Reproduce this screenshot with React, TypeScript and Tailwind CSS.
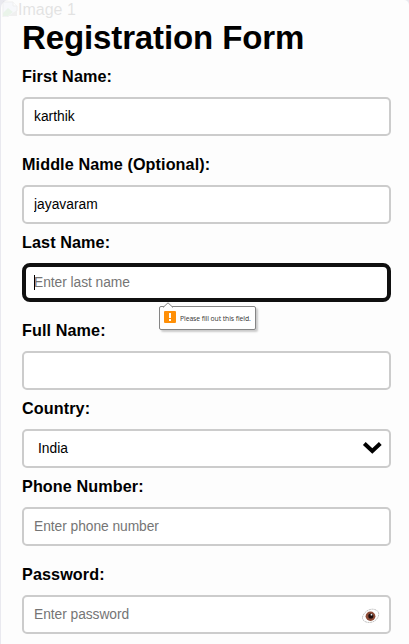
import { ChangeEvent, ReactNode, useState } from "react";

const inputClass =
  "block h-[39px] w-full rounded-[5px] border-2 border-[#cccccc] bg-white px-[10px] text-[13.8px] text-black placeholder:tracking-[-0.05px] placeholder:text-[#757575] outline-none";

function Field({ label, className, children }: { label: string; className: string; children: ReactNode }) {
  return (
    <div className={className}>
      <label className="block h-[30px] text-[16.2px] leading-[18px] font-bold tracking-[0.09px] text-black">
        {label}
      </label>
      <div className="relative">{children}</div>
    </div>
  );
}

function BrokenImage() {
  return (
    <div className="absolute top-0 left-px flex items-start opacity-10">
      <svg className="mt-px h-4 w-4" viewBox="0 0 16 16">
        <path d="M1 1h10l4 4v5L5 16H1z" fill="#c5d6f3" stroke="#888" />
        <path d="M1 15v-3l5-5 5 4-5 4z" fill="#4caf50" />
        <path d="M11 1v4h4" fill="#fff" stroke="#888" />
        <path d="M7 15l8-6v6z" fill="#888" />
      </svg>
      <span className="text-[16px] leading-[19px] text-black">Image 1</span>
    </div>
  );
}

function ValidationBubble() {
  return (
    <div className="absolute top-[43px] left-[137px] z-10 flex h-[24px] w-[97px] items-center rounded-[2px] border border-[#858585] bg-white pl-[4px] shadow-[2px_2px_2px_rgba(0,0,0,0.2)]">
      <svg className="absolute -top-[5px] left-[3px] h-[6px] w-[10px]" viewBox="0 0 10 6">
        <path d="M0 5.5L5 .8l5 4.7V6H0z" fill="#fff" />
        <path d="M0 5.5L5 .8l5 4.7" fill="none" stroke="#858585" />
      </svg>
      <span className="mr-[4px] -mt-[2px] flex h-[12px] w-[12px] shrink-0 items-center justify-center rounded-[1px] bg-[#ff9008]">
        <svg className="h-[12px] w-[12px]" viewBox="0 0 12 12">
          <path d="M5 2h2v5H5zM5 8h2v2H5z" fill="#fff" />
        </svg>
      </span>
      <span className="mt-[2px] font-['Open_Sans',sans-serif] text-[6.8px] leading-none tracking-[-0.07px] whitespace-nowrap text-[#333]">
        Please fill out this field.
      </span>
    </div>
  );
}

function Eye() {
  return (
    <svg className="absolute top-[13px] right-[11px] h-[16px] w-[18px]" viewBox="0 0 18 16">
      <path
        d="M.3 9.5C1.7 4.5 6 1.2 10.5 1.2c4 0 6.4 2.2 6.2 5.3-.3 4-4 7.7-9 8C3.9 14.7.3 12.7.3 9.5z"
        fill="#fff"
        stroke="#b5b5b5"
        strokeWidth=".8"
        strokeDasharray="2 .6"
      />
      <ellipse cx="8.5" cy="8.3" rx="4.9" ry="4.7" fill="#8d4c37" />
      <ellipse cx="8.8" cy="8" rx="2.5" ry="2.6" fill="#1b0d0c" />
      <circle cx="9.5" cy="6.7" r=".9" fill="#e6eef5" />
    </svg>
  );
}

export default function App() {
  const [first, setFirst] = useState("karthik");
  const [middle, setMiddle] = useState("jayavaram");
  const update = (set: (value: string) => void) => (e: ChangeEvent<HTMLInputElement>) => set(e.target.value);

  return (
    <div className="h-[644px] w-full overflow-hidden bg-[#e9e9ef] pl-px font-['Liberation_Sans',Arial,sans-serif]">
      <main className="relative h-full rounded-tl-[8px] rounded-tr-[5px] bg-[#fdfdfd] pr-[18px] pl-[21px]">
        <BrokenImage />
        <h1 className="h-[67px] pt-[19px] text-[33px] leading-[37px] font-bold tracking-[-0.12px] whitespace-nowrap text-black">
          Registration Form
        </h1>
        <Field label="First Name:" className="h-[88px]">
          <input className={inputClass} value={first} onChange={update(setFirst)} />
        </Field>
        <Field label="Middle Name (Optional):" className="h-[78px]">
          <input className={inputClass} value={middle} onChange={update(setMiddle)} />
        </Field>
        <Field label="Last Name:" className="h-[88px]">
          <input
            className="block h-[39px] w-full rounded-[8px] border-4 border-[#101010] bg-white px-[8px] text-[13.8px] tracking-[-0.05px] outline-none placeholder:text-[#757575]"
            placeholder="Enter last name"
          />
          <span className="absolute top-[12px] left-[12px] h-[15px] w-px bg-black" />
          <ValidationBubble />
        </Field>
        <Field label="Full Name:" className="h-[78px]">
          <input className={inputClass} />
        </Field>
        <Field label="Country:" className="h-[78px]">
          <select className={`${inputClass} appearance-none pt-[2px] pl-[14px]`} defaultValue="India">
            <option>India</option>
          </select>
          <svg className="pointer-events-none absolute top-[12px] right-[9px] h-[14px] w-[20px]" viewBox="0 0 20 14">
            <path d="M2.3 2.5L10.3 10L18.3 2.5" fill="none" stroke="#000" strokeWidth="4" />
          </svg>
        </Field>
        <Field label="Phone Number:" className="h-[88px]">
          <input className={inputClass} placeholder="Enter phone number" />
        </Field>
        <Field label="Password:" className="h-[69px]">
          <input type="password" className={inputClass} placeholder="Enter password" />
          <Eye />
        </Field>
      </main>
    </div>
  );
}
